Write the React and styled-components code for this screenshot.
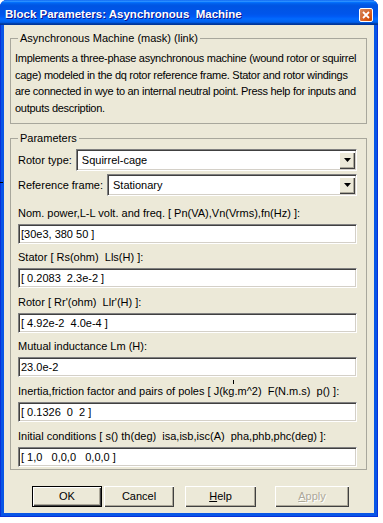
import React from 'react';
import styled, { createGlobalStyle } from 'styled-components';

const GlobalStyle = createGlobalStyle`
  html, body { margin: 0; padding: 0; background: #fff; }
  body {
    font-family: "Liberation Sans", Arial, sans-serif;
    font-size: 11px;
    color: #000;
  }
`;

const Window = styled.div`
  position: relative;
  width: 378px;
  height: 517px;
  display: flex;
  flex-direction: column;
  background: #0855e6;
  border-radius: 7px 7px 0 0;
  box-shadow: inset 1px 0 #0831d9, inset -1px 0 #0831d9, inset 0 -1px #0831d9;
`;

const TitleBar = styled.div`
  height: 25px;
  flex: none;
  display: flex;
  align-items: center;
  justify-content: space-between;
  padding: 3px 5px 0 5px;
  box-sizing: border-box;
  border-radius: 7px 7px 0 0;
  background: linear-gradient(
    180deg,
    #0058ee 0%,
    #3593ff 4%,
    #288eff 6%,
    #127dff 8%,
    #036ffc 10%,
    #0262ee 14%,
    #0057e5 20%,
    #0054e3 24%,
    #0055eb 56%,
    #005bf5 66%,
    #026afe 76%,
    #0062ef 86%,
    #0052d6 92%,
    #0040ab 94%,
    #003092 100%
  );
`;

const Title = styled.span`
  color: #fff;
  font-weight: bold;
  font-size: 11.5px;
  white-space: pre;
  text-shadow: 1px 1px #0f1089;
`;

const CloseButton = styled.div`
  width: 14px;
  height: 14px;
  margin-top: 1px;
  box-sizing: border-box;
  border: 1px solid #fff;
  border-radius: 2px;
  display: flex;
  align-items: center;
  justify-content: center;
  background: radial-gradient(circle at 90% 90%, #cc4600 0%, #dc6527 55%, #cd7546 70%, #e98c58 100%);
`;

const Client = styled.div`
  flex: 1;
  margin: 0 4px 4px 4px;
  background: #ece9d8;
  display: flex;
  flex-direction: column;
  padding: 7px 7px 0 6px;
`;

const Group = styled.fieldset`
  margin: ${(p) => p.$top || 0}px 0 0 0;
  border: 1px solid #a8a79c;
  padding: ${(p) => p.$pad};
  min-width: 0;
`;

const Legend = styled.legend`
  padding: 0 2px;
  margin-left: ${(p) => p.$shift || 0}px;
  line-height: 13px;
`;

const Description = styled.p`
  margin: 5px 0 0 0;
  line-height: 16.5px;
  letter-spacing: -0.28px;
  white-space: nowrap;
`;

const Params = styled.div`
  display: flex;
  flex-direction: column;
  gap: 7.6px;
`;

const SelectStack = styled.div`
  display: flex;
  flex-direction: column;
  gap: 3px;
  margin-top: 4px;
  margin-bottom: 3px;
`;

const SelectRow = styled.div`
  display: flex;
  align-items: center;
  gap: 4px;
`;

const Label = styled.label`
  display: block;
  line-height: 13px;
  white-space: pre;
  flex: none;
`;

const sunken = `
  box-sizing: border-box;
  border-style: solid;
  border-width: 1px;
  border-color: #808080 #fff #fff #808080;
  box-shadow: inset 1px 1px #404040, inset -1px -1px #d4d0c8;
  background: #fff;
`;

const Select = styled.div`
  ${sunken}
  flex: 1;
  height: 22px;
  display: flex;
  align-items: center;
  justify-content: space-between;
  padding: 0 1px 0 5px;
`;

const DropButton = styled.div`
  width: 16px;
  height: 17px;
  box-sizing: border-box;
  background: #ece9d8;
  display: flex;
  align-items: center;
  justify-content: center;
  box-shadow: inset 1px 1px #fff, inset -1px -1px #404040, inset -2px -2px #aca899;
`;

const Field = styled.div`
  display: flex;
  flex-direction: column;
  gap: 4px;
`;

const TextInput = styled.input`
  ${sunken}
  height: 20px;
  width: 100%;
  margin: 0;
  padding: 0 0 0 2px;
  font: inherit;
  white-space: pre;
  color: #000;
  outline: none;
`;

const ButtonRow = styled.div`
  display: flex;
  margin-top: 16px;
  padding-left: 22px;
`;

const Button = styled.button`
  height: 21px;
  width: ${(p) => p.$w}px;
  margin-left: ${(p) => p.$gap || 0}px;
  box-sizing: border-box;
  padding: 0;
  font: inherit;
  background: #ece9d8;
  color: ${(p) => (p.disabled ? '#aca899' : '#000')};
  text-shadow: ${(p) => (p.disabled ? '1px 1px #fff' : 'none')};
  border: ${(p) => (p.$default ? '1px solid #000' : '0')};
  box-shadow: inset 1px 1px #fff, inset -1px -1px #404040, inset -2px -2px #aca899;
  cursor: default;
`;

const Mark = styled.span`
  position: absolute;
  left: ${(p) => p.$x}px;
  top: ${(p) => p.$y}px;
  width: ${(p) => p.$w}px;
  height: ${(p) => p.$h}px;
  background: #000;
`;

const Arrow = () => (
  <svg width="7" height="4" viewBox="0 0 7 4">
    <polygon points="0,0 7,0 3.5,4" fill="#000" />
  </svg>
);

const fields = [
  ['Nom. power,L-L volt. and freq. [ Pn(VA),Vn(Vrms),fn(Hz) ]:', '[30e3, 380 50 ]'],
  ['Stator [ Rs(ohm)  Lls(H) ]:', '[ 0.2083  2.3e-2 ]'],
  ["Rotor [ Rr'(ohm)  Llr'(H) ]:", '[ 4.92e-2  4.0e-4 ]'],
  ['Mutual inductance Lm (H):', '23.0e-2'],
  ['Inertia,friction factor and pairs of poles [ J(kg.m^2)  F(N.m.s)  p() ]:', '[ 0.1326  0  2 ]'],
  ['Initial conditions [ s() th(deg)  isa,isb,isc(A)  pha,phb,phc(deg) ]:', '[ 1,0   0,0,0   0,0,0 ]'],
];

const App = () => (
  <>
    <GlobalStyle />
    <Window>
      <TitleBar>
        <Title>Block Parameters: Asynchronous  Machine</Title>
        <CloseButton>
          <svg width="8" height="8" viewBox="0 0 8 8">
            <path d="M1 1 L7 7 M7 1 L1 7" stroke="#fff" strokeWidth="1.8" />
          </svg>
        </CloseButton>
      </TitleBar>
      <Client>
        <Group $pad="0 4px 7px 4px">
          <Legend $shift={3}>Asynchronous Machine (mask) (link)</Legend>
          <Description>
            Implements a three-phase asynchronous machine (wound rotor or squirrel
            <br />
            cage) modeled in the dq rotor reference frame. Stator and rotor windings
            <br />
            are connected in wye to an internal neutral point. Press help for inputs and
            <br />
            outputs description.
          </Description>
        </Group>
        <Group $top={8} $pad="0 9px 2px 7px">
          <Legend>Parameters</Legend>
          <Params>
            <SelectStack>
              <SelectRow>
                <Label>Rotor type:</Label>
                <Select>
                  <span>Squirrel-cage</span>
                  <DropButton><Arrow /></DropButton>
                </Select>
              </SelectRow>
              <SelectRow>
                <Label>Reference frame:</Label>
                <Select>
                  <span>Stationary</span>
                  <DropButton><Arrow /></DropButton>
                </Select>
              </SelectRow>
            </SelectStack>
            {fields.map(([label, value]) => (
              <Field key={label}>
                <Label>{label}</Label>
                <TextInput readOnly defaultValue={value} />
              </Field>
            ))}
          </Params>
        </Group>
        <ButtonRow>
          <Button $default $w={70}>OK</Button>
          <Button $w={70} $gap={2}>Cancel</Button>
          <Button $w={71} $gap={11}><u>H</u>elp</Button>
          <Button $w={74} $gap={19} disabled><u>A</u>pply</Button>
        </ButtonRow>
      </Client>
      <Mark $x={0} $y={182} $w={3} $h={1} />
      <Mark $x={233} $y={380} $w={1} $h={4} />
    </Window>
  </>
);

export default App;
